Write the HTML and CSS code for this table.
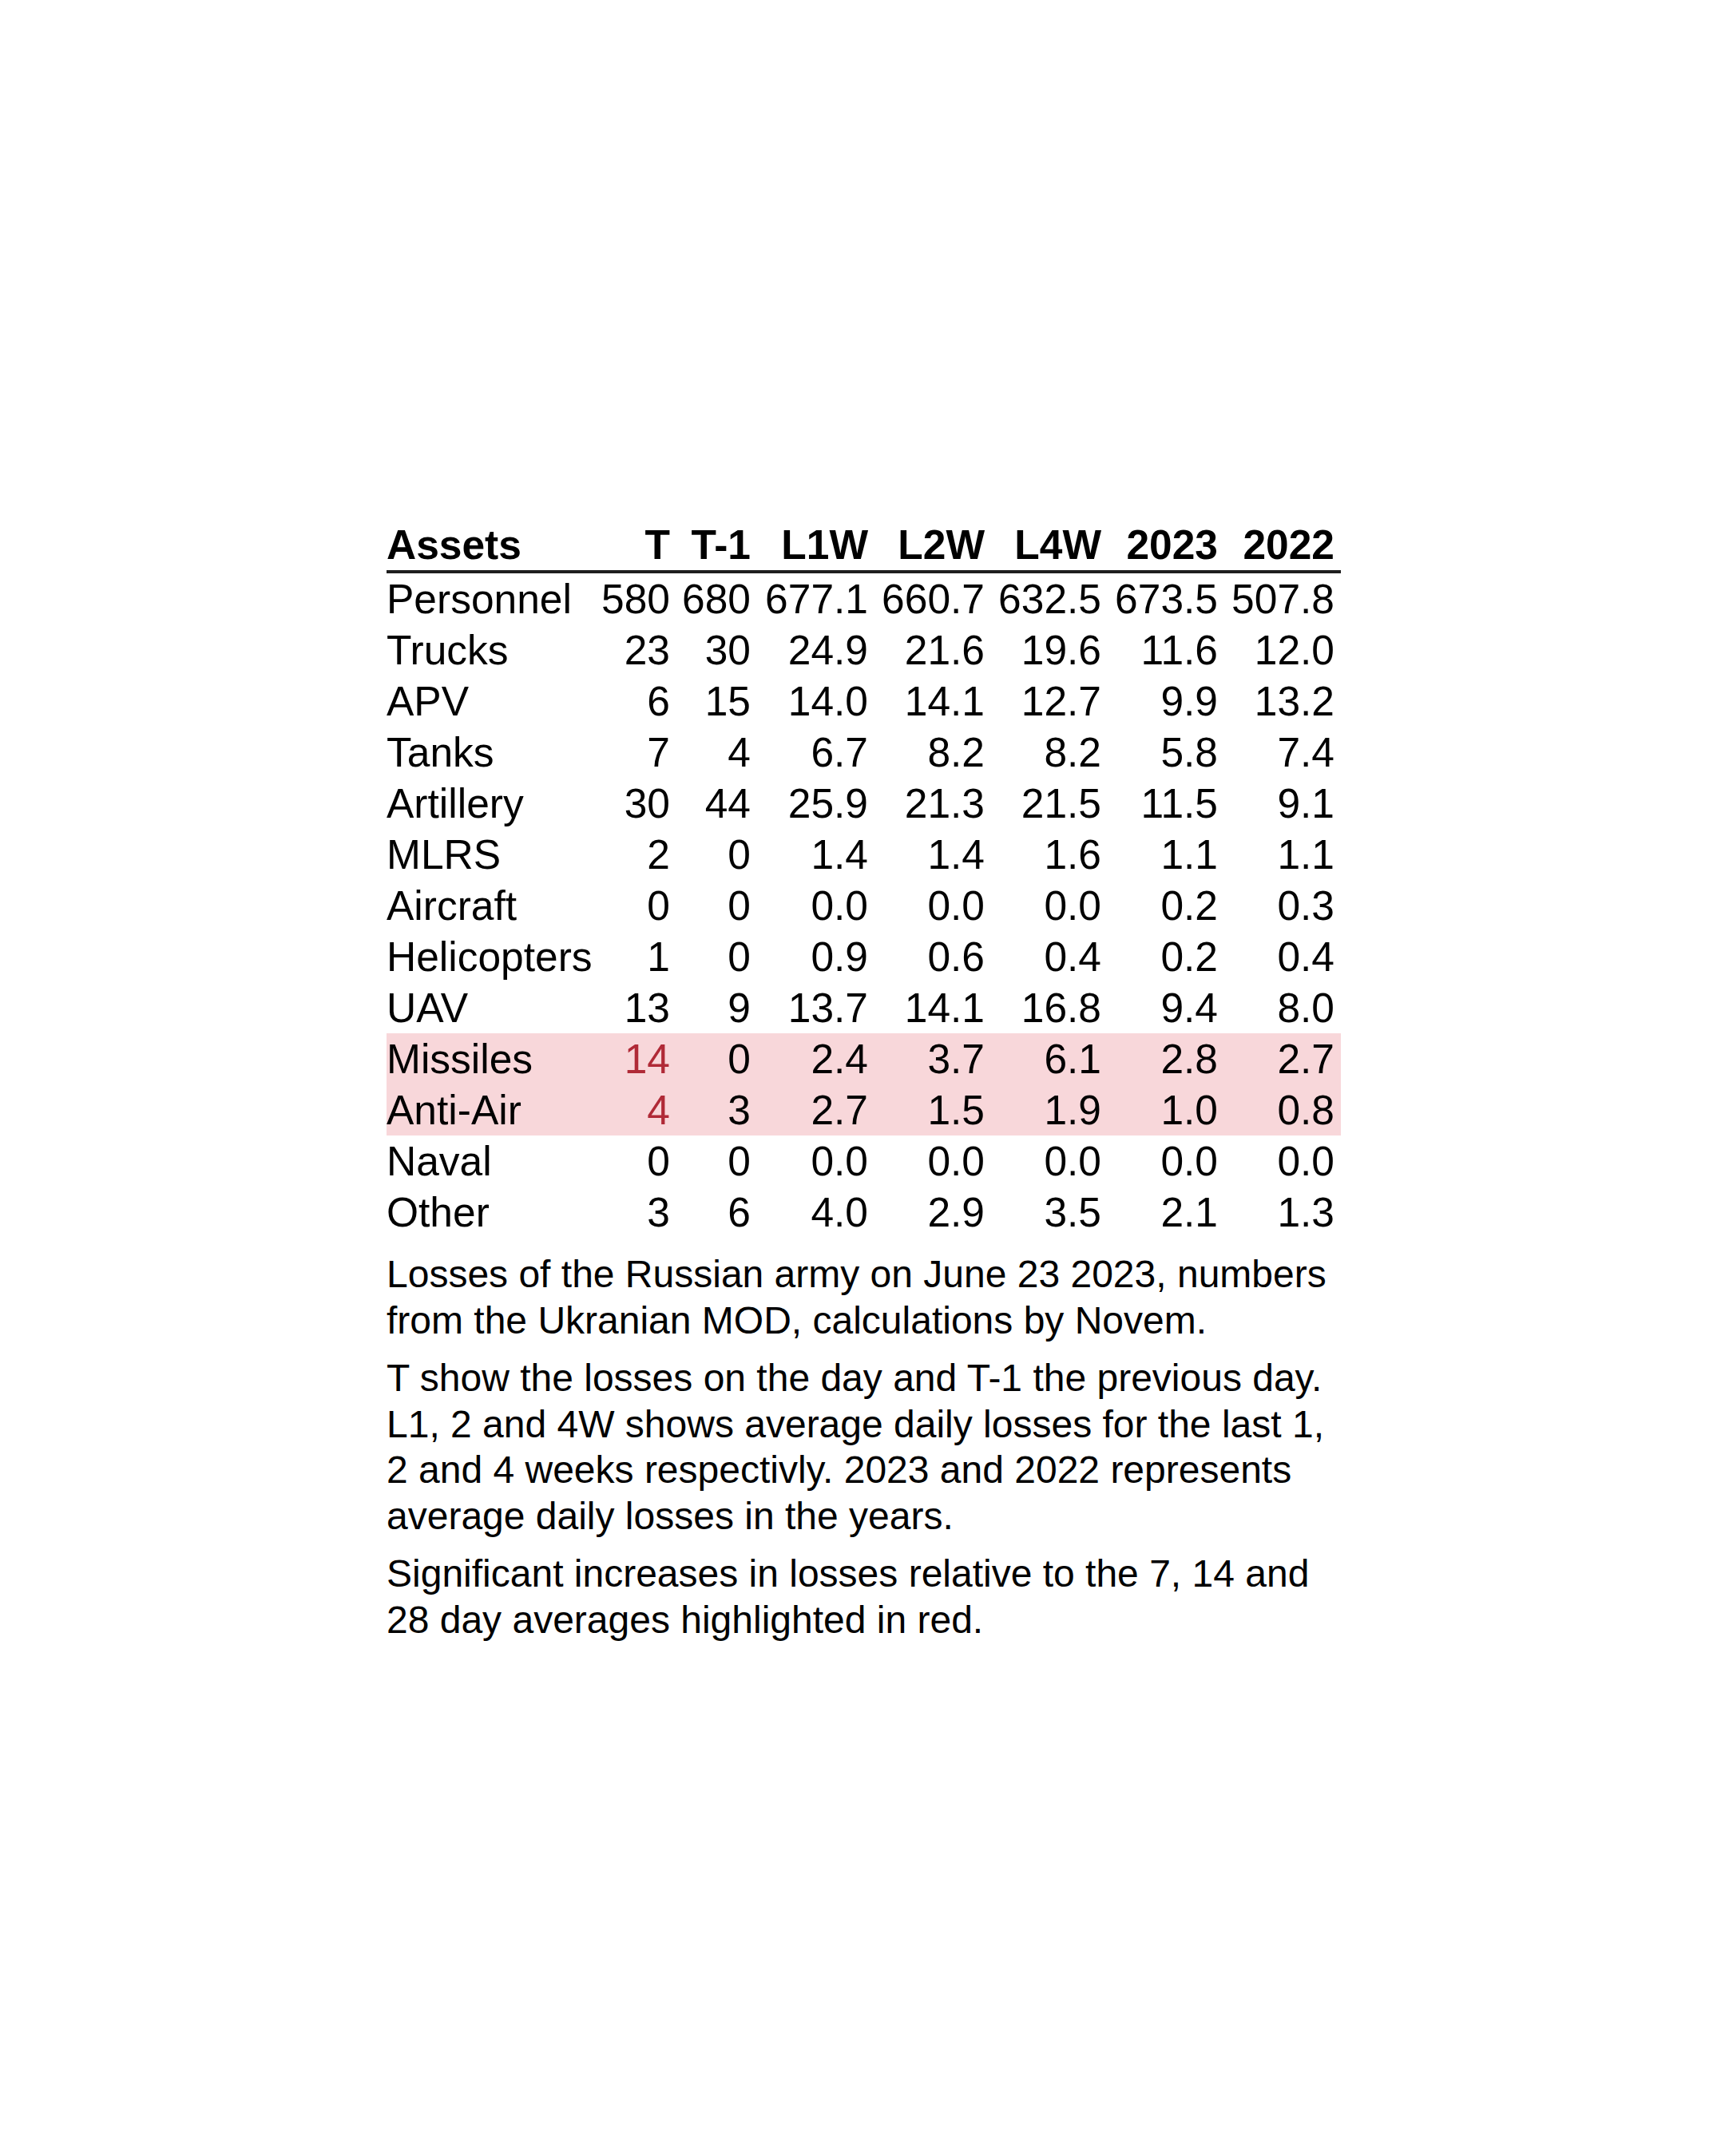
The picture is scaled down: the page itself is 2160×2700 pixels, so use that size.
FILE: index.html
```html
<!DOCTYPE html>
<html lang="en">
<head>
<meta charset="utf-8">
<title>Losses of the Russian army</title>
<link rel="stylesheet" href="styles.css">
</head>
<body>
<main class="page">
  <table class="losses">
    <colgroup>
      <col class="c-asset">
      <col class="c-t">
      <col class="c-t1">
      <col class="c-num c-first">
      <col class="c-num">
      <col class="c-num">
      <col class="c-num">
      <col class="c-num">
    </colgroup>
    <thead>
      <tr>
        <th class="label">Assets</th>
        <th>T</th>
        <th>T-1</th>
        <th>L1W</th>
        <th>L2W</th>
        <th>L4W</th>
        <th>2023</th>
        <th>2022</th>
      </tr>
    </thead>
    <tbody>
      <tr><td class="label">Personnel</td><td>580</td><td>680</td><td>677.1</td><td>660.7</td><td>632.5</td><td>673.5</td><td>507.8</td></tr>
      <tr><td class="label">Trucks</td><td>23</td><td>30</td><td>24.9</td><td>21.6</td><td>19.6</td><td>11.6</td><td>12.0</td></tr>
      <tr><td class="label">APV</td><td>6</td><td>15</td><td>14.0</td><td>14.1</td><td>12.7</td><td>9.9</td><td>13.2</td></tr>
      <tr><td class="label">Tanks</td><td>7</td><td>4</td><td>6.7</td><td>8.2</td><td>8.2</td><td>5.8</td><td>7.4</td></tr>
      <tr><td class="label">Artillery</td><td>30</td><td>44</td><td>25.9</td><td>21.3</td><td>21.5</td><td>11.5</td><td>9.1</td></tr>
      <tr><td class="label">MLRS</td><td>2</td><td>0</td><td>1.4</td><td>1.4</td><td>1.6</td><td>1.1</td><td>1.1</td></tr>
      <tr><td class="label">Aircraft</td><td>0</td><td>0</td><td>0.0</td><td>0.0</td><td>0.0</td><td>0.2</td><td>0.3</td></tr>
      <tr><td class="label">Helicopters</td><td>1</td><td>0</td><td>0.9</td><td>0.6</td><td>0.4</td><td>0.2</td><td>0.4</td></tr>
      <tr><td class="label">UAV</td><td>13</td><td>9</td><td>13.7</td><td>14.1</td><td>16.8</td><td>9.4</td><td>8.0</td></tr>
      <tr class="flag"><td class="label">Missiles</td><td class="alert">14</td><td>0</td><td>2.4</td><td>3.7</td><td>6.1</td><td>2.8</td><td>2.7</td></tr>
      <tr class="flag"><td class="label">Anti-Air</td><td class="alert">4</td><td>3</td><td>2.7</td><td>1.5</td><td>1.9</td><td>1.0</td><td>0.8</td></tr>
      <tr><td class="label">Naval</td><td>0</td><td>0</td><td>0.0</td><td>0.0</td><td>0.0</td><td>0.0</td><td>0.0</td></tr>
      <tr><td class="label">Other</td><td>3</td><td>6</td><td>4.0</td><td>2.9</td><td>3.5</td><td>2.1</td><td>1.3</td></tr>
    </tbody>
  </table>
  <div class="notes">
    <p>Losses of the Russian army on June 23 2023, numbers from the Ukranian MOD, calculations by Novem.</p>
    <p>T show the losses on the day and T-1 the previous day. L1, 2 and 4W shows average daily losses for the last 1, 2 and 4 weeks respectivly. 2023 and 2022 represents average daily losses in the years.</p>
    <p>Significant increases in losses relative to the 7, 14 and 28 day averages highlighted in red.</p>
  </div>
</main>
</body>
</html>
```

FILE: styles.css
```css
html, body {
  margin: 0;
  padding: 0;
  background: #ffffff;
}

body {
  font-family: "Liberation Sans", Arial, sans-serif;
  color: #000000;
}

.page {
  width: 1195px;
  padding: 650px 0 0 484px;
}

.losses {
  width: 1195px;
  table-layout: fixed;
  border-collapse: collapse;
  border-spacing: 0;
  font-size: 51.5px;
  line-height: 64px;
}

.c-asset { width: 260px; }
.c-t { width: 103px; }
.c-t1 { width: 101px; }
.c-num { width: 146px; }
.c-num.c-first { width: 147px; }

.losses th,
.losses td {
  padding: 0 8px 0 0;
  text-align: right;
  white-space: nowrap;
  vertical-align: baseline;
}

.losses th {
  font-weight: bold;
  border-bottom: 4px solid #1e1e1e;
}

.losses .label {
  text-align: left;
  padding: 0;
}

.losses tr.flag td {
  background: #f8d7da;
}

.losses td.alert {
  color: #b02a37;
}

.notes {
  width: 1195px;
  font-size: 48px;
  line-height: 57.5px;
  padding-top: 17px;
}

.notes p {
  margin: 0 0 15px 0;
}
```
